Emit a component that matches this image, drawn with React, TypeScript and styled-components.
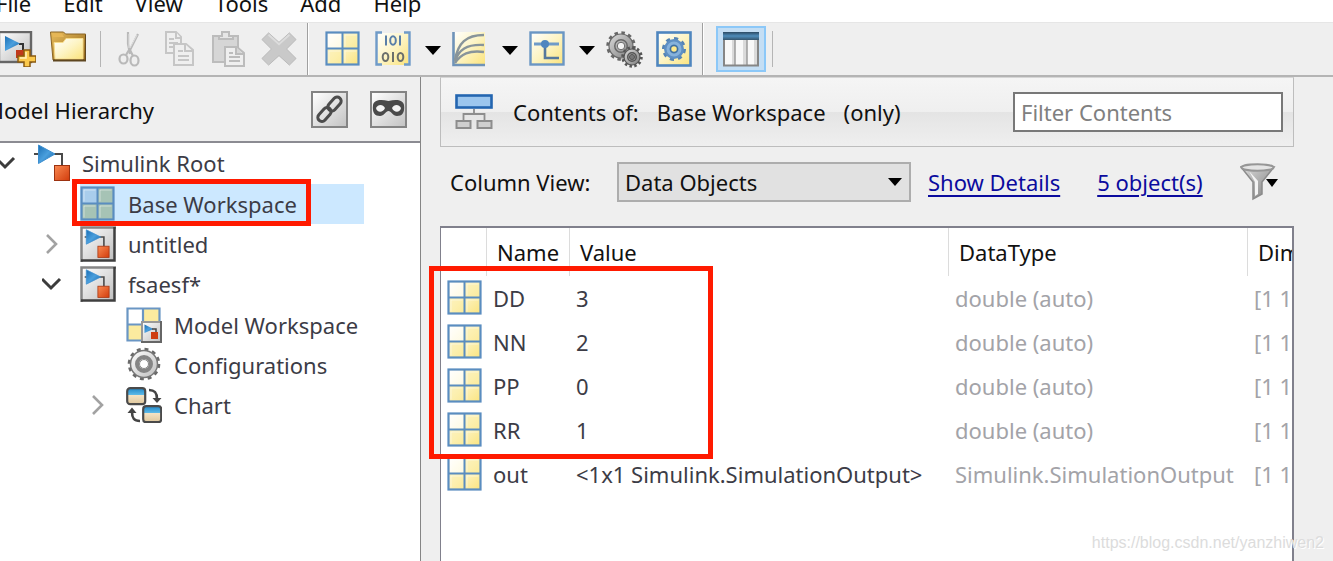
import React from "react";
import styled, { createGlobalStyle, css } from "styled-components";

const GlobalStyle = createGlobalStyle`
  *, *::before, *::after { box-sizing: border-box; }
  body {
    margin: 0;
    background: #efefef;
    color: #111;
    font: 22px/28px "Noto Sans", "Open Sans", sans-serif;
    overflow: hidden;
  }
  button, input, select { font: inherit; color: inherit; }
  svg { display: block; flex: none; }
`;

/* ---------- shell ---------- */

const Window = styled.div`
  position: relative;
  display: flex;
  flex-direction: column;
  min-height: 100vh;
  overflow: hidden;
`;

const MenuBar = styled.nav`
  display: flex;
  align-items: flex-end;
  gap: 32px;
  height: 22px;
  margin-left: -4px;
  padding-bottom: 5px;
  background: #fff;
`;

const MenuItem = styled.button`
  flex: none;
  padding: 0;
  border: 0;
  background: none;
`;

const ToolBar = styled.div`
  display: flex;
  height: 55px;
  border-top: 1px solid #e6e6e6;
  border-bottom: 2px solid #b4b4b4;
`;

const ToolGroup = styled.div<{ $lead?: number; $line?: boolean }>`
  display: flex;
  align-items: center;
  flex: none;
  padding-left: ${(p) => p.$lead ?? 0}px;
  ${(p) =>
    p.$line &&
    css`
      border-right: 1px solid #a0a0a0;
      box-shadow: 1px 0 0 #fff;
    `}
`;

const ToolButton = styled.button<{ $tail?: number }>`
  flex: none;
  width: 36px;
  height: 36px;
  margin-right: ${(p) => p.$tail ?? 14}px;
  padding: 0;
  border: 0;
  background: none;
`;

const DropButton = styled.button`
  flex: none;
  width: 16px;
  height: 36px;
  margin-right: 11px;
  padding: 0;
  border: 0;
  background: none;
`;

const ToggleButton = styled.button`
  flex: none;
  width: 50px;
  height: 46px;
  margin-right: 6px;
  padding: 0 5px;
  border: 2px solid #8cc8f8;
  background: #c4def4;
`;

const Divider = styled.span<{ $tail?: number }>`
  flex: none;
  width: 1px;
  height: 36px;
  margin-right: ${(p) => p.$tail ?? 0}px;
  background: #b5b5b5;
`;

const Body = styled.div`
  display: flex;
  flex: 1;
`;

/* ---------- hierarchy pane ---------- */

const HierarchyPane = styled.aside`
  display: flex;
  flex: none;
  flex-direction: column;
  width: 421px;
  overflow: hidden;
  border-right: 1px solid #858585;
`;

const PaneHeader = styled.div`
  display: flex;
  align-items: center;
  gap: 22px;
  height: 64px;
  margin-left: -16px;
  padding-right: 13px;
`;

const PaneTitle = styled.h2`
  flex: 1;
  margin: 0;
  padding-top: 2px;
  font-size: 22px;
  font-weight: 400;
`;

const PaneButton = styled.button`
  width: 37px;
  height: 37px;
  padding: 0;
  border: 2px solid #848484;
  background: linear-gradient(135deg, #fff, #c4c4c4);
`;

const TreeBox = styled.div`
  flex: 1;
  border-top: 2px solid #8b8b92;
  background: #fff;
`;

const Tree = styled.ul<{ $nested?: boolean }>`
  margin: ${(p) => (p.$nested ? "1px 0 0 46px" : "0 0 0 -4px")};
  padding: 0;
  list-style: none;
  color: #3c3c46;
`;

const TreeRow = styled.div`
  display: flex;
  align-items: center;
  height: 40px;
`;

const Twisty = styled.button`
  width: 20px;
  height: 20px;
  margin-right: 18px;
  padding: 0;
  border: 0;
  background: none;
`;

const TreeLabel = styled.span<{ $selected?: boolean }>`
  position: relative;
  display: flex;
  align-items: center;
  gap: 12px;
  height: 40px;
  white-space: nowrap;
  ${(p) =>
    p.$selected &&
    css`
      width: 284px;
      background: #cce8ff;
    `}
`;

/* ---------- contents pane ---------- */

const ContentsPane = styled.main`
  display: flex;
  flex: 1;
  flex-direction: column;
  min-width: 0;
  margin: 0 39px 0 19px;
`;

const ContentsHeader = styled.div`
  display: flex;
  align-items: center;
  height: 70px;
  padding: 0 10px 0 14px;
  border: 1px solid #bdbdbd;
  border-top-color: #d6d6d6;
  background: linear-gradient(#f5f5f5, #efefef 50%, #e4e4e4 50%, #efefef);
`;

const ContentsTitle = styled.h1`
  display: flex;
  flex: 1;
  gap: 18px;
  margin: 0 0 0 20px;
  font-size: 22px;
  font-weight: 400;
  white-space: nowrap;
`;

const FilterInput = styled.input`
  width: 270px;
  height: 40px;
  padding: 0 6px;
  border: 2px solid #787878;
  border-radius: 0;
  background: #fff;
  &::placeholder { color: #808080; opacity: 1; }
`;

const ViewRow = styled.div`
  display: flex;
  align-items: center;
  height: 70px;
  padding-left: 10px;
  white-space: nowrap;
`;

const ViewLabel = styled.label`
  width: 167px;
`;

const SelectWrap = styled.span`
  position: relative;
  width: 294px;
  margin-right: 17px;
  svg { position: absolute; right: 9px; top: 16px; pointer-events: none; }
`;

const ViewSelect = styled.select`
  display: block;
  width: 100%;
  height: 40px;
  padding: 0 6px;
  appearance: none;
  border: 2px solid #adadad;
  border-radius: 0;
  background: #e1e1e1;
`;

const Link = styled.a`
  margin-right: 37px;
  color: #0b0b9e;
  text-decoration: underline;
  text-decoration-thickness: 2px;
  text-underline-offset: 4px;
`;

const FunnelButton = styled.button`
  width: 38px;
  height: 38px;
  padding: 0;
  border: 0;
  background: none;
`;

const TableArea = styled.div`
  position: relative;
  display: flex;
  flex: 1;
  margin-top: 9px;
`;

const TableBox = styled.div`
  flex: 1;
  min-width: 0;
  overflow: hidden;
  border: solid #80808c;
  border-width: 2px 2px 0 1px;
  background: #fff;
`;

const DataTable = styled.table`
  width: 906px;
  table-layout: fixed;
  border-collapse: separate;
  border-spacing: 0;
  text-align: left;
  white-space: nowrap;
`;

const HeadCell = styled.th`
  height: 48px;
  padding: 0 0 0 10px;
  border-right: 1px solid #dcdcdc;
  font-weight: 400;
`;

const Cell = styled.td<{ $muted?: boolean }>`
  height: 44px;
  padding: 0 0 0 6px;
  color: ${(p) => (p.$muted ? "#a3a3a8" : "#3c3c46")};
`;

/* ---------- annotations ---------- */

const Mark = styled.span<{ $left: number; $top: number; $width: number; $height: number }>`
  position: absolute;
  left: ${(p) => p.$left}px;
  top: ${(p) => p.$top}px;
  width: ${(p) => p.$width}px;
  height: ${(p) => p.$height}px;
  border: 5px solid #ff1a00;
  pointer-events: none;
`;

const Watermark = styled.span`
  position: absolute;
  right: 9px;
  bottom: 6px;
  color: #dcdcdc;
  font: 16px/24px "Liberation Sans", Arial, sans-serif;
  text-shadow: 1px 1px 0 #fff;
`;

/* ---------- icons ---------- */

const Defs = () => (
  <svg width="0" height="0" style={{ position: "absolute" }} aria-hidden="true">
    <defs>
      <linearGradient id="cream" x1="0" y1="0" x2="1" y2="1">
        <stop offset="0" stopColor="#fff" />
        <stop offset="0.5" stopColor="#fdf4c4" />
        <stop offset="1" stopColor="#fbe37c" />
      </linearGradient>
      <linearGradient id="gold" x1="0" y1="0" x2="1" y2="1">
        <stop offset="0" stopColor="#e9bd5c" />
        <stop offset="1" stopColor="#8f6318" />
      </linearGradient>
      <linearGradient id="silver" x1="0" y1="0" x2="1" y2="1">
        <stop offset="0" stopColor="#fff" />
        <stop offset="1" stopColor="#bdbdbd" />
      </linearGradient>
      <linearGradient id="steel" x1="0" y1="0" x2="1" y2="1">
        <stop offset="0" stopColor="#dcdcdc" />
        <stop offset="1" stopColor="#7c7c7c" />
      </linearGradient>
      <linearGradient id="blue" x1="0" y1="0" x2="1" y2="1">
        <stop offset="0" stopColor="#1b6fb5" />
        <stop offset="0.5" stopColor="#4a9fdd" />
        <stop offset="1" stopColor="#1763a5" />
      </linearGradient>
      <linearGradient id="orange" x1="0" y1="0" x2="1" y2="1">
        <stop offset="0" stopColor="#f98a52" />
        <stop offset="1" stopColor="#d23c0c" />
      </linearGradient>
      <linearGradient id="bar" x1="0" y1="0" x2="0" y2="1">
        <stop offset="0" stopColor="#2c4a63" />
        <stop offset="0.5" stopColor="#4f8dbb" />
        <stop offset="1" stopColor="#35556d" />
      </linearGradient>
      <linearGradient id="sky" x1="0" y1="0" x2="0" y2="1">
        <stop offset="0" stopColor="#1f87c8" />
        <stop offset="0.4" stopColor="#5cb8e6" />
        <stop offset="0.42" stopColor="#f5e4c6" />
        <stop offset="1" stopColor="#dfc79c" />
      </linearGradient>
    </defs>
  </svg>
);

const GridIcon = ({ tint }: { tint?: boolean }) => (
  <svg width="36" height="36" viewBox="0 0 36 36">
    <rect x="1" y="1" width="33" height="33" fill={tint ? "#a9cdec" : "url(#cream)"} />
    {tint && <path d="M18 2h15v31H2V18h16z" fill="#a5c0a8" opacity="0.8" />}
    {!tint && <path d="M3 3h14v14H3z" fill="#fff" opacity="0.5" />}
    {!tint && <path d="M18 3h15v15H18zM3 18h15v15H3z" fill="#fbe88f" opacity="0.4" />}
    <rect x="1.500" y="1.500" width="32" height="32" fill="none" stroke="#5a8dc0" strokeWidth="2.200" />
    <path d="M17.500 2v31M2 17.500h31" stroke="#5a8dc0" strokeWidth="2" />
    <path d="M4 15.500V4h11.500M20 15.500V4h11.500M4 31.500V20h11.500M20 31.500V20h11.500" fill="none" stroke="#fff" opacity="0.45" />
  </svg>
);

const Blocks = () => (
  <>
    <path d="M4 10h4M22 10h6v12" fill="none" stroke="#4a4a4a" strokeWidth="2" />
    <path d="M6 1v18L24 10z" fill="url(#blue)" stroke="#3d8fd0" />
    <rect x="20.500" y="21.500" width="14" height="14" fill="url(#orange)" stroke="#a8350f" />
  </>
);

const RootIcon = () => (
  <svg width="36" height="36" viewBox="0 0 36 36" overflow="visible">
    <path d="M0 9h5M20 9h8v11" fill="none" stroke="#4a4a4a" strokeWidth="2" />
    <path d="M4.500 0v18.500L21 9z" fill="url(#blue)" stroke="#3d8fd0" />
    <rect x="20.500" y="20.500" width="15" height="15" fill="url(#orange)" stroke="#9c3210" />
  </svg>
);

const ModelIcon = () => (
  <svg width="36" height="36" viewBox="0 0 36 36">
    <rect x="1" y="1" width="34" height="34" fill="url(#silver)" />
    <path d="M1.500 36V1.500H36" fill="none" stroke="#858585" strokeWidth="2.500" />
    <path d="M1 34.500h33.500V1" fill="none" stroke="#3f3f3f" strokeWidth="2.500" />
    <g transform="translate(1.500 3) scale(0.8)"><Blocks /></g>
  </svg>
);

const NewModelIcon = () => (
  <svg width="36" height="36" viewBox="0 0 36 36">
    <rect x="-1" y="1" width="32" height="30" fill="url(#silver)" stroke="#666" strokeWidth="2.400" />
    <path d="M19 13h4v8" fill="none" stroke="#333" strokeWidth="2" />
    <path d="M5 5v15l15-7.500z" fill="url(#blue)" />
    <rect x="16" y="19" width="9" height="8" fill="#c0391b" />
    <path d="M24 19h6v6h6v6h-6v5h-6v-5h-6v-6h6z" fill="#fbc94c" stroke="#8a5a10" strokeWidth="1.500" />
    <path d="M26 21v6h-6" fill="none" stroke="#fff3c0" strokeWidth="1.500" />
  </svg>
);

const FolderIcon = () => (
  <svg width="36" height="36" viewBox="0 0 36 36">
    <path d="M0.500 1h13l2 2H35.500v26H3z" fill="url(#gold)" stroke="#8a6524" />
    <path d="M2 2.500h10l2 3.500H3z" fill="#e6b656" />
    <path d="M4 11.500h9l3-4h17V28H5z" fill="url(#cream)" stroke="#f6dc8c" />
    <path d="M3 29.500h33V4" fill="none" stroke="#5e4620" strokeWidth="1.800" />
  </svg>
);

const CutIcon = () => (
  <svg width="36" height="36" viewBox="0 0 36 36" fill="none" stroke="#b9b9b9" strokeWidth="2.200">
    <path d="M17 1v12l2 10M27 3L18 21" />
    <path d="M18 3v14M26 4l-7 13" stroke="#dedede" strokeWidth="1" />
    <ellipse cx="12.500" cy="28" rx="4" ry="4.500" />
    <ellipse cx="23.500" cy="29.500" rx="4" ry="5" />
    <path d="M15 24l3-5M22 25l-3-6" />
  </svg>
);

const CopyIcon = () => (
  <svg width="36" height="36" viewBox="0 0 36 36" fill="#efefef" stroke="#c6c6c6" strokeWidth="2">
    <path d="M5 1h10l5 5v16H5z" />
    <path d="M15 1v6h5M8 8h5M8 12h9M8 16h9" />
    <path d="M13 13h12l7 6v15H13z" />
    <path d="M24 13v7h7M17 20h5M17 25h11M17 29h11" />
  </svg>
);

const PasteIcon = () => (
  <svg width="36" height="36" viewBox="0 0 36 36" fill="#d6d6d6" stroke="#bcbcbc" strokeWidth="2">
    <path d="M2 5h25v26H2z" />
    <path d="M8 8V5h3V1h7v4h4v3z" fill="#e6e6e6" />
    <path d="M14 16h12l7 6v13H14z" fill="#efefef" />
    <path d="M25 16v7h7M18 22h4M18 26h11M18 30h11" />
  </svg>
);

const DeleteIcon = () => (
  <svg width="36" height="36" viewBox="0 0 38 36">
    <path d="M8 1l11 10L30 1l7 7-10 10 10 10-7 7-11-10L8 35l-7-7 10-10L1 8z" fill="#c9c9c9" stroke="#b8b8b8" strokeWidth="1" />
    <path d="M8 3l11 10L30 3" fill="none" stroke="#dcdcdc" strokeWidth="2" />
  </svg>
);

const BinaryIcon = () => (
  <svg width="36" height="36" viewBox="0 0 36 36">
    <rect x="3" y="2" width="30" height="32" fill="url(#cream)" />
    <path d="M7 1.500H1.500v32H7M29 1.500h5.500v32H29" fill="none" stroke="#6f9bc8" strokeWidth="2.400" />
    <g fill="none" stroke="#5a7fa8" strokeWidth="2">
      <path d="M11 4.500v10M25 4.500v10" />
      <ellipse cx="18" cy="9.500" rx="2.800" ry="4.200" />
      <ellipse cx="10.500" cy="26" rx="2.800" ry="4" stroke="#6b6f6c" />
      <path d="M18 21v10" stroke="#6b6f6c" />
      <ellipse cx="25.500" cy="26" rx="2.800" ry="4" stroke="#6b6f6c" />
    </g>
  </svg>
);

const PlotIcon = () => (
  <svg width="36" height="36" viewBox="0 0 36 36">
    <rect x="1" y="1" width="32" height="33" fill="url(#cream)" />
    <path d="M1.500 1v33H33" fill="none" stroke="#6f93b8" strokeWidth="2.600" />
    <path d="M3 29C6 12 14 4 32 4M3 30c4-11 11-17 29-16M3 32c6-9 14-13 29-11" fill="none" stroke="#88949a" strokeWidth="2.400" />
  </svg>
);

const SignalIcon = () => (
  <svg width="36" height="36" viewBox="0 0 36 36">
    <rect x="1.500" y="1.500" width="33" height="32" fill="url(#cream)" stroke="#6a96c4" strokeWidth="2.400" />
    <path d="M5 13h25" stroke="#6f9bc8" strokeWidth="3" />
    <path d="M16 13v14h14" fill="none" stroke="#56789c" strokeWidth="2.600" />
    <circle cx="16" cy="13" r="4" fill="#4f86bf" />
  </svg>
);

const Gear = ({ cx, cy, r, fill, line, hole }: { cx: number; cy: number; r: number; fill: string; line: string; hole: string }) => (
  <g transform={`translate(${cx} ${cy})`}>
    <circle r={r} fill="none" stroke={line} strokeWidth="4.500" strokeDasharray={`${(r * 6.2832) / 24}`} />
    <circle r={r - 0.5} fill={fill} stroke={line} strokeWidth="1.200" />
    <circle r={r * 0.5} fill="none" stroke={line} strokeWidth="1.500" />
    <circle r={r * 0.3} fill={hole} stroke={line} strokeWidth="1" />
  </g>
);

const GearsIcon = () => (
  <svg width="38" height="38" viewBox="0 0 38 38">
    <Gear cx={15} cy={15} r={12.5} fill="url(#steel)" line="#686868" hole="#f4f4f4" />
    <Gear cx={26} cy={26} r={8.5} fill="url(#steel)" line="#555" hole="#777" />
  </svg>
);

const GearBoxIcon = () => (
  <svg width="36" height="36" viewBox="0 0 36 36">
    <rect x="1.500" y="1.500" width="33" height="33" fill="url(#cream)" stroke="#4f86bf" strokeWidth="2.600" />
    <circle cx="18" cy="18" r="10.500" fill="none" stroke="#5584b4" strokeWidth="3" strokeDasharray="4.100" />
    <circle cx="18" cy="18" r="10" fill="#5f90c4" />
    <circle cx="18" cy="18" r="6" fill="none" stroke="#86b2dc" strokeWidth="3" />
    <circle cx="18" cy="18" r="3.500" fill="#ffe98c" stroke="#3f6f9f" strokeWidth="1.500" />
  </svg>
);

const ConfigIcon = () => (
  <svg width="36" height="36" viewBox="0 0 36 36">
    <g transform="translate(18 17)">
      <circle r="14.500" fill="none" stroke="#6a6a6a" strokeWidth="3.600" strokeDasharray="3.800" />
      <circle r="13.500" fill="url(#silver)" stroke="#777" strokeWidth="1.500" />
      <circle r="7" fill="none" stroke="#858585" strokeWidth="4" />
      <circle r="4.500" fill="#fff" stroke="#888" />
    </g>
  </svg>
);

const ColumnsIcon = () => (
  <svg width="36" height="36" viewBox="0 0 36 36">
    <rect x="0.500" y="1" width="35" height="34" fill="#f8f8f8" />
    <path d="M9 8h3v27H9zM20 8h4v27h-4zM31 8h4v27h-4z" fill="#dadada" />
    <path d="M12 8v27M24 8v27" stroke="#9a9a9a" strokeWidth="1.500" />
    <path d="M1 8v26.500h34V8" fill="none" stroke="#868686" strokeWidth="2" />
    <rect x="0" y="1" width="36" height="8" fill="url(#bar)" />
  </svg>
);

const ModelWorkspaceIcon = () => (
  <svg width="36" height="36" viewBox="0 0 36 36">
    <rect x="1" y="1" width="33" height="32" fill="#fff" />
    <path d="M18 2h15v12H18zM2 18h14v15H2z" fill="#fbeb9f" />
    <path d="M1.500 1.500h32v32h-32zM17 1v15M1 17.500h16" fill="none" stroke="#6a96c4" strokeWidth="2.200" />
    <rect x="16" y="15" width="20" height="20" fill="url(#silver)" stroke="#999" strokeWidth="2" />
    <path d="M15 35h20V14" fill="none" stroke="#666" strokeWidth="2" />
    <path d="M18.500 17.500v8.500l9-4z" fill="url(#blue)" />
    <path d="M26 22h4v4" fill="none" stroke="#444" strokeWidth="1.500" />
    <rect x="25" y="25" width="7" height="7" fill="#cf3d10" />
  </svg>
);

const ChartIcon = () => (
  <svg width="36" height="36" viewBox="0 0 36 36">
    <rect x="1.200" y="1.200" width="18" height="16" rx="3" fill="url(#sky)" stroke="#4a4a4a" strokeWidth="2.200" />
    <rect x="17.200" y="19.200" width="18" height="16" rx="3" fill="url(#sky)" stroke="#4a4a4a" strokeWidth="2.200" />
    <path d="M23 3c6 0 8 3 8 9" fill="none" stroke="#444" strokeWidth="2.600" />
    <path d="M26.500 11h9L31 16z" fill="#444" />
    <path d="M14 34c-6 0-8-3-8-9" fill="none" stroke="#444" strokeWidth="2.600" />
    <path d="M1.500 26h9L6 20.500z" fill="#444" />
  </svg>
);

const HierarchyIcon = () => (
  <svg width="38" height="36" viewBox="0 0 38 36">
    <rect x="1.500" y="1.500" width="35" height="12" fill="#9cc6ee" stroke="#2365b0" strokeWidth="2.600" />
    <path d="M19 15v5M8.500 26v-6h21v6" fill="none" stroke="#8d8d8d" strokeWidth="1.800" />
    <rect x="1.500" y="27" width="14" height="7" fill="#cfcfcf" stroke="#8d8d8d" strokeWidth="2" />
    <rect x="22.500" y="27" width="14" height="7" fill="#cfcfcf" stroke="#8d8d8d" strokeWidth="2" />
  </svg>
);

const LinkIcon = () => (
  <svg width="33" height="33" viewBox="0 0 33 33" fill="none" stroke="#4c4c4c" strokeWidth="3">
    <rect x="-8" y="-4" width="16" height="8" rx="4" transform="translate(21.500 11) rotate(-48)" />
    <rect x="-8" y="-4" width="16" height="8" rx="4" transform="translate(11.500 21.500) rotate(-48)" />
  </svg>
);

const MaskIcon = () => (
  <svg width="33" height="33" viewBox="0 0 33 33">
    <path
      fill="#4a4a4a"
      d="M1 12C2 7 8 6 16.500 8C25 6 31 7 32 12C33 20 30 23 25 23C21 23 19 18 16.500 18C14 18 12 23 8 23C3 23 0 20 1 12Z"
    />
    <path d="M4 15C5 20 11 20 13 15C11 11 6 11 4 15ZM20 15C22 20 28 20 29 15C27 11 22 11 20 15Z" fill="#f4f4f4" />
  </svg>
);

const FunnelIcon = () => (
  <svg width="38" height="38" viewBox="0 0 38 38">
    <path d="M1 4l12 15v17l9-5V19L34 4z" fill="url(#steel)" stroke="#8b8b8b" strokeWidth="1.500" />
    <path d="M15 19v14l3-2V18L9 8z" fill="#f4f4f4" />
    <ellipse cx="17.500" cy="4.500" rx="16" ry="3.200" fill="#e4e4e4" stroke="#969696" strokeWidth="2" />
    <path d="M26 16h12l-6 8z" fill="#000" />
  </svg>
);

const DropArrow = () => (
  <svg width="16" height="36" viewBox="0 0 16 36">
    <path d="M0 15h16l-8 9z" fill="#000" />
  </svg>
);

const Chevron = ({ open }: { open?: boolean }) => (
  <svg width="20" height="20" viewBox="0 0 20 20" fill="none">
    {open ? (
      <path d="M0 5l9 9 9-9" stroke="#3c3c3c" strokeWidth="3" />
    ) : (
      <path d="M5 1l9 9-9 9" stroke="#a2a2a2" strokeWidth="2.600" />
    )}
  </svg>
);

/* ---------- data ---------- */

type Node = {
  label: string;
  icon: React.ReactNode;
  open?: boolean;
  selected?: boolean;
  expandable?: boolean;
  children?: Node[];
};

const hierarchy: Node[] = [
  {
    label: "Simulink Root",
    icon: <RootIcon />,
    open: true,
    expandable: true,
    children: [
      { label: "Base Workspace", icon: <GridIcon tint />, selected: true },
      { label: "untitled", icon: <ModelIcon />, expandable: true },
      {
        label: "fsaesf*",
        icon: <ModelIcon />,
        open: true,
        expandable: true,
        children: [
          { label: "Model Workspace", icon: <ModelWorkspaceIcon /> },
          { label: "Configurations", icon: <ConfigIcon /> },
          { label: "Chart", icon: <ChartIcon />, expandable: true },
        ],
      },
    ],
  },
];

const variables = [
  { name: "DD", value: "3", type: "double (auto)" },
  { name: "NN", value: "2", type: "double (auto)" },
  { name: "PP", value: "0", type: "double (auto)" },
  { name: "RR", value: "1", type: "double (auto)" },
  { name: "out", value: "<1x1 Simulink.SimulationOutput>", type: "Simulink.SimulationOutput" },
];

const menus = ["File", "Edit", "View", "Tools", "Add", "Help"];

const TreeNodes = ({ nodes, nested }: { nodes: Node[]; nested?: boolean }) => (
  <Tree $nested={nested}>
    {nodes.map((n) => (
      <li key={n.label}>
        <TreeRow>
          <Twisty
            aria-label={`Toggle ${n.label}`}
            disabled={!n.expandable}
          >
            {n.expandable && <Chevron open={n.open} />}
          </Twisty>
          <TreeLabel $selected={n.selected}>
            {n.icon}
            {n.label}
            {n.selected && <Mark $left={-8} $top={-5} $width={239} $height={47} />}
          </TreeLabel>
        </TreeRow>
        {n.children && <TreeNodes nodes={n.children} nested />}
      </li>
    ))}
  </Tree>
);

export default function App() {
  return (
    <Window>
      <GlobalStyle />
      <Defs />
      <MenuBar>
        {menus.map((m) => (
          <MenuItem key={m}>{m}</MenuItem>
        ))}
      </MenuBar>
      <ToolBar>
        <ToolGroup $line>
          <ToolButton aria-label="New model"><NewModelIcon /></ToolButton>
          <ToolButton aria-label="Open"><FolderIcon /></ToolButton>
          <Divider $tail={10} />
          <ToolButton aria-label="Cut"><CutIcon /></ToolButton>
          <ToolButton aria-label="Copy"><CopyIcon /></ToolButton>
          <ToolButton aria-label="Paste"><PasteIcon /></ToolButton>
          <ToolButton aria-label="Delete" $tail={10}><DeleteIcon /></ToolButton>
        </ToolGroup>
        <ToolGroup $lead={17} $line>
          <ToolButton aria-label="Add variable"><GridIcon /></ToolButton>
          <ToolButton aria-label="Add data type"><BinaryIcon /></ToolButton>
          <DropButton aria-label="More data types"><DropArrow /></DropButton>
          <ToolButton aria-label="Add lookup table"><PlotIcon /></ToolButton>
          <DropButton aria-label="More lookup tables"><DropArrow /></DropButton>
          <ToolButton aria-label="Add signal"><SignalIcon /></ToolButton>
          <DropButton aria-label="More signals"><DropArrow /></DropButton>
          <ToolButton aria-label="Add configuration set"><GearsIcon /></ToolButton>
          <ToolButton aria-label="Add configuration reference" $tail={10}><GearBoxIcon /></ToolButton>
        </ToolGroup>
        <ToolGroup $lead={13}>
          <ToggleButton aria-label="Show contents" aria-pressed="true"><ColumnsIcon /></ToggleButton>
          <Divider />
        </ToolGroup>
      </ToolBar>
      <Body>
        <HierarchyPane>
          <PaneHeader>
            <PaneTitle>Model Hierarchy</PaneTitle>
            <PaneButton aria-label="Show linked items"><LinkIcon /></PaneButton>
            <PaneButton aria-label="Show masked items"><MaskIcon /></PaneButton>
          </PaneHeader>
          <TreeBox>
            <TreeNodes nodes={hierarchy} />
          </TreeBox>
        </HierarchyPane>
        <ContentsPane>
          <ContentsHeader>
            <HierarchyIcon />
            <ContentsTitle>
              <span>Contents of:</span>
              <span>Base Workspace</span>
              <span>(only)</span>
            </ContentsTitle>
            <FilterInput aria-label="Filter Contents" placeholder="Filter Contents" />
          </ContentsHeader>
          <ViewRow>
            <ViewLabel htmlFor="column-view">Column View:</ViewLabel>
            <SelectWrap>
              <ViewSelect id="column-view">
                <option>Data Objects</option>
              </ViewSelect>
              <svg width="14" height="8" viewBox="0 0 14 8">
                <path d="M0 0h14L7 8z" fill="#000" />
              </svg>
            </SelectWrap>
            <Link href="#details">Show Details</Link>
            <Link href="#objects">5 object(s)</Link>
            <FunnelButton aria-label="Filter"><FunnelIcon /></FunnelButton>
          </ViewRow>
          <TableArea>
            <TableBox>
              <DataTable>
                <colgroup>
                  <col style={{ width: 46 }} />
                  <col style={{ width: 83 }} />
                  <col style={{ width: 379 }} />
                  <col style={{ width: 299 }} />
                  <col style={{ width: 99 }} />
                </colgroup>
                <thead>
                  <tr>
                    <HeadCell aria-label="Icon" />
                    <HeadCell>Name</HeadCell>
                    <HeadCell>Value</HeadCell>
                    <HeadCell>DataType</HeadCell>
                    <HeadCell>Dimensions</HeadCell>
                  </tr>
                </thead>
                <tbody>
                  {variables.map((v) => (
                    <tr key={v.name}>
                      <Cell><GridIcon /></Cell>
                      <Cell>{v.name}</Cell>
                      <Cell>{v.value}</Cell>
                      <Cell $muted>{v.type}</Cell>
                      <Cell $muted>[1 1]</Cell>
                    </tr>
                  ))}
                </tbody>
              </DataTable>
            </TableBox>
            <Mark $left={-11} $top={40} $width={284} $height={193} />
          </TableArea>
        </ContentsPane>
      </Body>
      <Watermark>https://blog.csdn.net/yanzhiwen2</Watermark>
    </Window>
  );
}
